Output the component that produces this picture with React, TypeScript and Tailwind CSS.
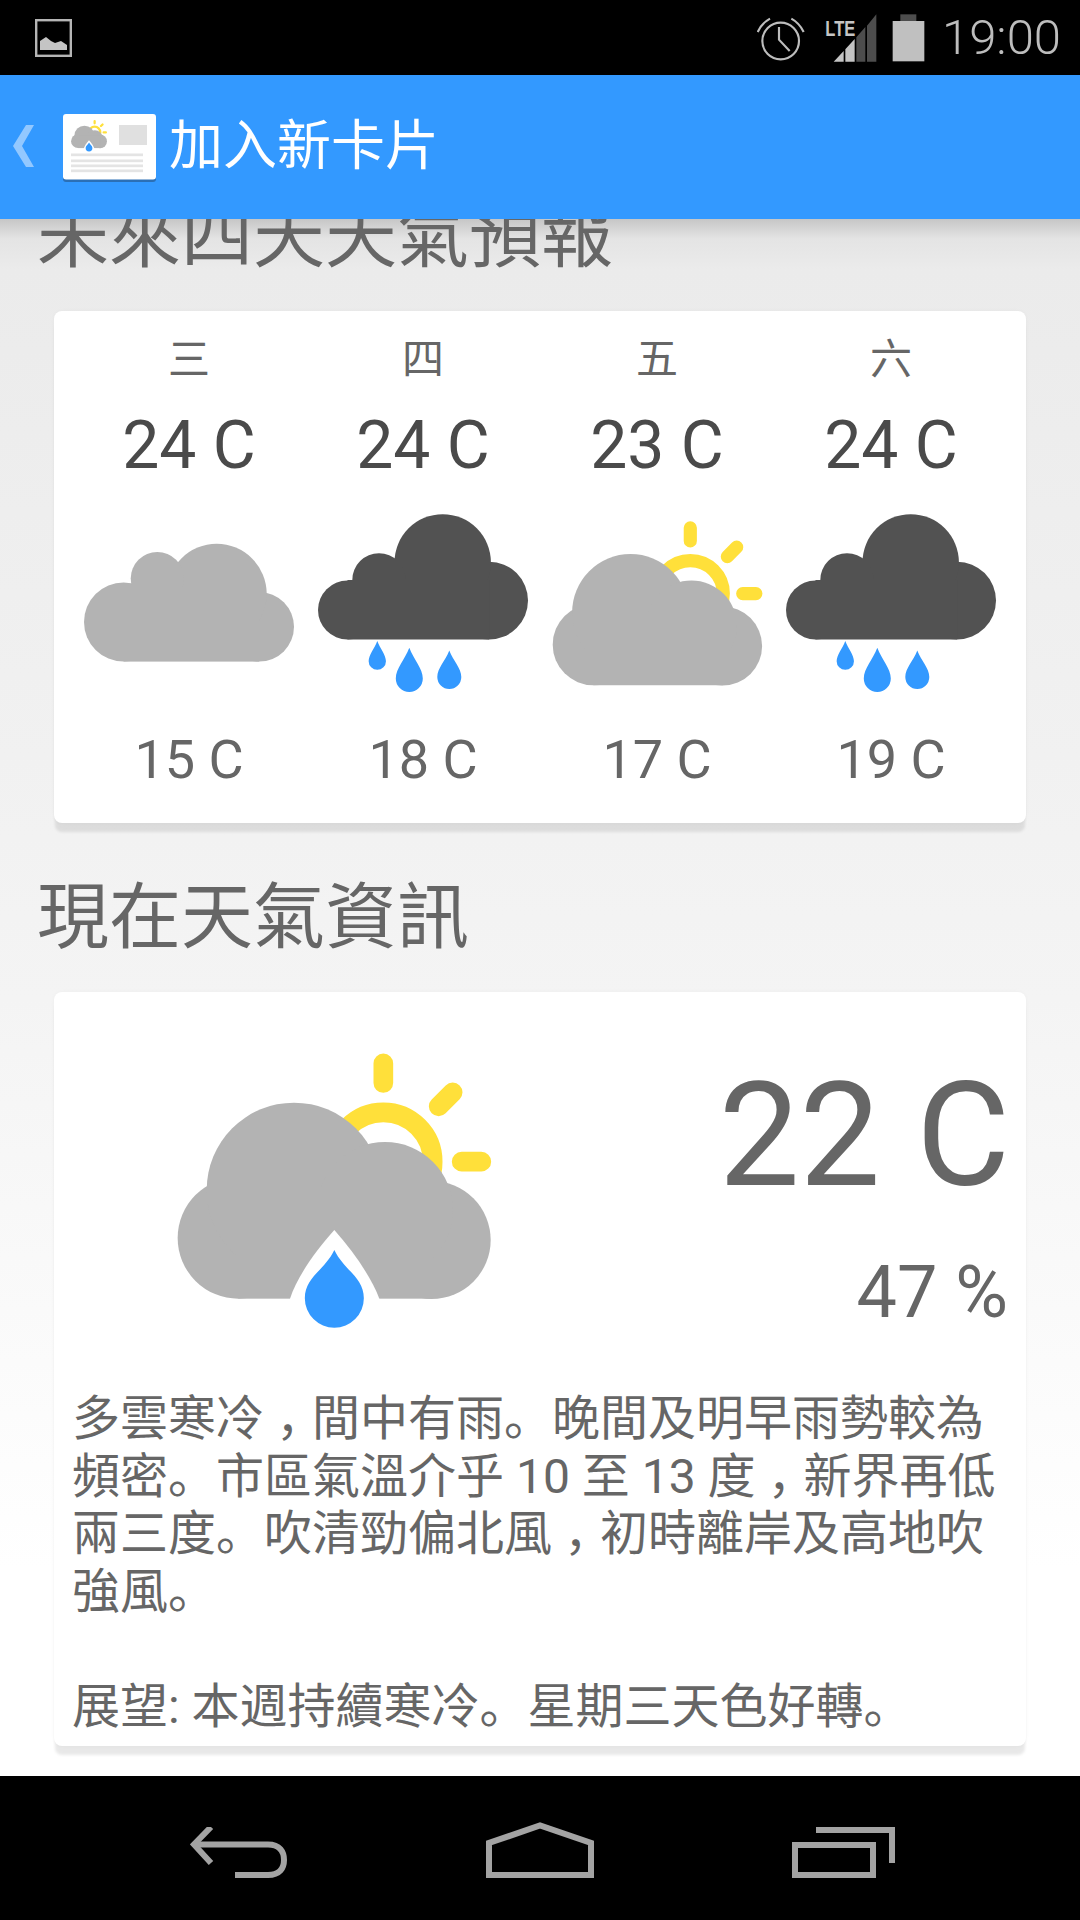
const GRAY = "#b3b3b3";
const DARK = "#525252";
const BLUE = "#3399ff";
const YELLOW = "#ffe03a";

function drop(cx: number, t: number, b: number, w: number) {
  const h = b - t;
  const r = w / 2;
  return `M${cx} ${t} C${cx + w * 0.16} ${t + h * 0.26} ${cx + r} ${b - w * 0.86} ${cx + r} ${b - r} A${r} ${r} 0 0 1 ${cx - r} ${b - r} C${cx - r} ${b - w * 0.86} ${cx - w * 0.16} ${t + h * 0.26} ${cx} ${t} Z`;
}

function SunCloud({ withDrop }: { withDrop?: boolean }) {
  return (
    <>
      <g fill="none" stroke={YELLOW} strokeWidth="59" strokeLinecap="round">
        <circle cx="700" cy="395" r="148" />
        <path d="M700 100V159M866 229L908 187M935 395H994" />
      </g>
      <g fill={GRAY}>
        <circle cx="265" cy="624" r="182" />
        <circle cx="845" cy="630" r="177" />
        <circle cx="432" cy="480" r="262" />
        <circle cx="705" cy="540" r="204" />
        <rect x="265" y="480" width="580" height="326" />
      </g>
      {withDrop && (
        <>
          <path d="M553 600C490 670 440 745 420 806L410 900H700L688 806C665 745 615 670 553 600Z" fill="#fff" />
          <path d={drop(553, 660, 893, 177)} fill={BLUE} />
        </>
      )}
    </>
  );
}

function GrayCloud() {
  return (
    <svg viewBox="0 0 234 200" className="w-[234px] h-[200px]">
      <g fill={GRAY}>
        <circle cx="51.6" cy="122" r="39.6" />
        <circle cx="187.2" cy="126.8" r="34.8" />
        <circle cx="144.7" cy="93.8" r="50" />
        <circle cx="85.3" cy="78.6" r="26.6" />
        <rect x="51.6" y="90" width="135.6" height="71.6" />
      </g>
    </svg>
  );
}

function RainCloud() {
  return (
    <svg viewBox="0 0 234 200" className="w-[234px] h-[200px]">
      <g fill={DARK}>
        <circle cx="41.5" cy="110" r="29.5" />
        <circle cx="183.1" cy="100.6" r="38.9" />
        <circle cx="136.7" cy="62.4" r="48.2" />
        <circle cx="73" cy="80" r="26.7" />
        <rect x="41.5" y="80" width="141.6" height="59.5" />
      </g>
      <g fill={BLUE}>
        <path d={drop(71.3, 140.9, 169.8, 17.3)} />
        <path d={drop(103.3, 147.8, 191.9, 27)} />
        <path d={drop(143.3, 150.6, 189.1, 24)} />
      </g>
    </svg>
  );
}

function SunCloudSmall() {
  return (
    <svg viewBox="0 0 234 200" className="w-[234px] h-[200px] overflow-visible">
      <g transform="translate(-5.8 5.5) scale(0.223)">
        <SunCloud />
      </g>
    </svg>
  );
}

const days = [
  { d: "三", hi: "24 C", lo: "15 C", icon: <GrayCloud /> },
  { d: "四", hi: "24 C", lo: "18 C", icon: <RainCloud /> },
  { d: "五", hi: "23 C", lo: "17 C", icon: <SunCloudSmall /> },
  { d: "六", hi: "24 C", lo: "19 C", icon: <RainCloud /> },
];

const cardCls =
  "mx-[54px] bg-white rounded-[8px] shadow-[0_10px_3px_-1px_rgba(0,0,0,0.09),0_0_4px_rgba(0,0,0,0.03)]";
const titleCls = "pl-[37px] h-[90px] text-[72px] leading-[90px] text-[#666666] whitespace-nowrap";

function Comma() {
  return <span className="px-[12px] [font-feature-settings:'halt']">，</span>;
}

function StatusBar() {
  return (
    <div className="h-[75px] bg-black flex items-center pl-[35px] shrink-0">
      <svg viewBox="0 0 37 38" className="w-[37px] h-[38px] shrink-0">
        <rect x="1.2" y="1.2" width="34.6" height="35.6" fill="none" stroke="#b5b5b5" strokeWidth="2.4" />
        <path d="M5 31V22L11 18L16 22L20 24L26 22L32 26V31Z" fill="#c4c4c4" />
      </svg>
      <svg viewBox="170 34 510 150" className="ml-[685px] w-[170px] h-[50px] shrink-0">
        <g fill="none" stroke="#bdbdbd" strokeWidth="6.5">
          <circle cx="241" cy="118" r="55" />
          <path d="M236 76V114L268 148" />
          <path d="M172 91Q185 64 209 51" />
          <path d="M273 51Q297 64 310 91" />
        </g>
        <text x="375" y="102" fontFamily="Liberation Sans" fontWeight="700" fontSize="68" fill="#c4c4c4" textLength="90" lengthAdjust="spacingAndGlyphs">
          LTE
        </text>
        <path d="M400 180L430 148V180ZM435 143L463 112V180H435Z" fill="#c4c4c4" />
        <path d="M468 107L495 76V180H468ZM500 72L528 38V180H500Z" fill="#4d4d4d" />
        <rect x="600" y="38" width="48" height="20" fill="#4d4d4d" />
        <rect x="577" y="58" width="95" height="121" fill="#c0c0c0" />
      </svg>
      <span className="ml-[15px] text-[49px] leading-[75px] font-light text-[#bdbdbd] font-['Roboto',sans-serif] whitespace-nowrap">19:00</span>
    </div>
  );
}

function AppBar() {
  return (
    <div className="h-[144px] bg-[#3399ff] flex items-center pl-[13px] shrink-0">
      <svg viewBox="0 0 21 42" className="w-[21px] h-[42px] mb-[3px]">
        <path d="M21 0H13L0 21L13 42H21L9 21Z" fill="#93c8ff" />
      </svg>
      <svg viewBox="0 0 93 68" className="ml-[29px] w-[93px] h-[68px] mt-[2px]">
        <rect x="0" y="1" width="93" height="67" rx="3" fill="#2b6fb5" />
        <rect x="0" y="0" width="93" height="65.5" rx="3" fill="#ffffff" />
        <g transform="translate(4.9 3.3) scale(0.0382)">
          <SunCloud withDrop />
        </g>
        <rect x="56" y="11" width="28" height="20" fill="#e0e0e0" />
        <g fill="#e4e4e4">
          <rect x="8" y="39.5" width="72" height="2.7" />
          <rect x="8" y="45.5" width="72" height="2.7" />
          <rect x="8" y="50.5" width="72" height="2.7" />
          <rect x="8" y="55.5" width="72" height="2.7" />
        </g>
      </svg>
      <span className="ml-[13px] text-[54px] leading-[60px] text-white">加入新卡片</span>
    </div>
  );
}

function NavBar() {
  return (
    <div className="h-[144px] bg-black flex items-start pl-[190px] pt-[46px] gap-[198px] shrink-0">
      <svg viewBox="0 0 98 51" className="w-[98px] h-[51px] mt-[5px]" fill="none" stroke="#a3a3a3" strokeWidth="6">
        <path d="M21 0L4 17.5L21 36" />
        <path d="M4 17.5H78C90 17.5 94 25 94 33C94 41 90 48 78 48H45" />
      </svg>
      <svg viewBox="0 0 108 56" className="w-[108px] h-[56px]" fill="none" stroke="#a3a3a3" strokeWidth="6">
        <path d="M3 53V21L54 3.5L105 21V53Z" />
      </svg>
      <svg viewBox="0 0 103 51" className="w-[103px] h-[51px] mt-[5px]" fill="none" stroke="#a3a3a3" strokeWidth="6">
        <rect x="3" y="18" width="78" height="30" />
        <path d="M24 3H100V36" />
      </svg>
    </div>
  );
}

export default function App() {
  return (
    <div className="w-[1080px] h-[1920px] flex flex-col overflow-hidden bg-black font-['Roboto','Noto_Sans_CJK_SC',sans-serif]">
      <StatusBar />
      <AppBar />
      <main className="h-[1557px] overflow-hidden bg-[linear-gradient(180deg,#c6c6c6_0px,#e4e4e4_20px,#ebebeb_50px,#f4f4f4_780px,#ffffff_1350px)]">
        <h2 className={`${titleCls} mt-[-27px] mb-[29px]`}>未來四天天氣預報</h2>
        <section className={`${cardCls} px-[18px] pt-[20px] pb-[29px] flex`}>
          {days.map((day, i) => (
            <div key={i} className="w-[234px] flex flex-col items-center">
              <div className="h-[58px] leading-[58px] text-[42px] text-[#666666]">{day.d}</div>
              <div className="mt-[17px] h-[80px] leading-[80px] text-[66px] text-[#4a4a4a]">{day.hi}</div>
              <div className="mt-[14px] h-[200px]">{day.icon}</div>
              <div className="mt-[26px] h-[68px] leading-[68px] text-[54px] text-[#666666]">{day.lo}</div>
            </div>
          ))}
        </section>
        <h2 className={`${titleCls} mt-[50px] mb-[29px]`}>現在天氣資訊</h2>
        <section className={`${cardCls} pt-[38px] pb-[11px]`}>
          <div className="flex">
            <svg viewBox="0 0 1080 960" className="ml-[96px] w-[360px] h-[320px] shrink-0">
              <SunCloud withDrop />
            </svg>
            <div className="flex-1 pr-[16px] pt-[31px] text-right text-[#666666]">
              <div className="text-[144px] leading-[150px]">22 C</div>
              <div className="mt-[37px] pr-[2px] text-[72px] leading-[90px]">47 %</div>
            </div>
          </div>
          <p className="mt-[40px] pl-[18px] text-[48px] leading-[57.5px] text-[#666666] whitespace-nowrap">
            多雲寒冷<Comma />間中有雨。晚間及明早雨勢較為
            <br />
            頻密。市區氣溫介乎 10 至 13 度<Comma />新界再低
            <br />
            兩三度。吹清勁偏北風<Comma />初時離岸及高地吹
            <br />
            強風。
            <br />
            <br />
            展望: 本週持續寒冷。星期三天色好轉。
          </p>
        </section>
      </main>
      <NavBar />
    </div>
  );
}
